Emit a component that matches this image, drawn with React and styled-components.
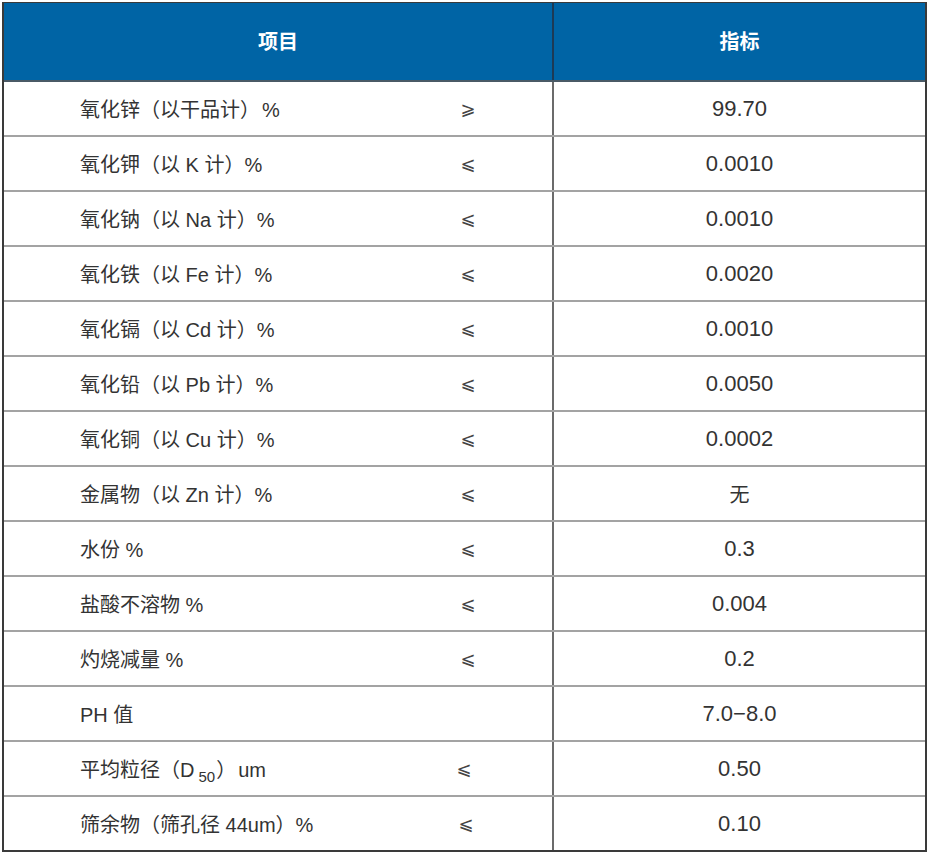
import React from "react";
import styled, { createGlobalStyle } from "styled-components";

const Global = createGlobalStyle`
  html, body { margin: 0; padding: 0; background: #fff; }
  body { font-family: "Liberation Sans", "Noto Sans CJK SC", sans-serif; }
`;

const Table = styled.div`
  margin: 2px 0 0 2px;
  width: 925px;
  border: 2px solid #3a3a3a;
  border-top-width: 1px;
  box-sizing: border-box;
  display: flex;
  flex-direction: column;
`;

const Header = styled.div`
  display: grid;
  grid-template-columns: 548px 2px 1fr;
  height: 79px;
  background: #0064a5;
  border-bottom: 2px solid #4a5a66;
  box-sizing: border-box;
`;

const HeadCell = styled.div`
  display: flex;
  align-items: center;
  justify-content: center;
  color: #fff;
  font-family: "Noto Sans CJK SC", sans-serif;
  font-weight: 700;
  font-size: 20px;
  padding-bottom: 3px;
`;

const HeadDivider = styled.div`
  background: #1d3a55;
`;

const Body = styled.div`
  display: flex;
  flex-direction: column;
  height: 768px;
`;

const Row = styled.div`
  flex: 1;
  display: grid;
  grid-template-columns: 548px 2px 1fr;
  border-bottom: ${(p) => (p.$last ? "none" : "2px solid #a3a3a3")};
  box-sizing: border-box;
`;

const NameCell = styled.div`
  display: grid;
  grid-template-columns: 424px 80px 1fr;
  align-items: center;
  color: #333;
`;

const Label = styled.div`
  padding-left: 76px;
  font-size: 20px;
  font-family: "Liberation Sans", "Noto Sans CJK SC", sans-serif;
  white-space: nowrap;
`;

const Sym = styled.div`
  text-align: center;
  font-family: "DejaVu Sans", sans-serif;
  font-size: 18px;
  color: #444;
  transform: translateX(${(p) => p.$shift || 0}px);
`;

const Divider = styled.div`
  background: #6b6b6b;
`;

const Value = styled.div`
  display: flex;
  align-items: center;
  justify-content: center;
  color: #333;
  font-size: 22px;
  font-family: "Liberation Sans", "Noto Sans CJK SC", sans-serif;
`;

const CjkValue = styled.span`
  font-size: 20px;
`;

const Sub = styled.span`
  font-size: 15px;
  position: relative;
  top: 5px;
  margin-left: 4px;
  margin-right: 1px;
`;

const Unit = styled.span`
  margin-left: ${(p) => p.$gap || 0}px;
`;

const rows = [
  { name: "氧化锌（以干品计）", unit: "%", gap: 2, sym: "⩾", val: "99.70" },
  { name: "氧化钾（以 K 计）", unit: "%", sym: "⩽", val: "0.0010" },
  { name: "氧化钠（以 Na 计）", unit: "%", sym: "⩽", val: "0.0010" },
  { name: "氧化铁（以 Fe 计）", unit: "%", sym: "⩽", val: "0.0020" },
  { name: "氧化镉（以 Cd 计）", unit: "%", sym: "⩽", val: "0.0010" },
  { name: "氧化铅（以 Pb 计）", unit: "%", sym: "⩽", val: "0.0050" },
  { name: "氧化铜（以 Cu 计）", unit: "%", sym: "⩽", val: "0.0002" },
  { name: "金属物（以 Zn 计）", unit: "%", sym: "⩽", val: "无", cjk: true },
  { name: "水份 ", unit: "%", sym: "⩽", val: "0.3" },
  { name: "盐酸不溶物 ", unit: "%", sym: "⩽", val: "0.004" },
  { name: "灼烧减量 ", unit: "%", sym: "⩽", val: "0.2" },
  { name: "PH 值", unit: "", sym: "", val: "7.0−8.0" },
  { name: "d50", unit: "", sym: "⩽", val: "0.50", shift: -4 },
  { name: "筛余物（筛孔径 44um）", unit: "%", sym: "⩽", val: "0.10", shift: -2 },
];

export default function App() {
  return (
    <>
      <Global />
      <Table>
        <Header>
          <HeadCell>项目</HeadCell>
          <HeadDivider />
          <HeadCell>指标</HeadCell>
        </Header>
        <Body>
          {rows.map((r, i) => (
            <Row key={i} $last={i === rows.length - 1}>
              <NameCell>
                <Label>
                  {r.name === "d50" ? (
                    <>
                      平均粒径（D<Sub>50</Sub>）<Unit $gap={2}>um</Unit>
                    </>
                  ) : (
                    <>
                      {r.name}
                      {r.unit && <Unit $gap={r.gap}>{r.unit}</Unit>}
                    </>
                  )}
                </Label>
                <Sym $shift={r.shift}>{r.sym}</Sym>
                <span />
              </NameCell>
              <Divider />
              <Value>{r.cjk ? <CjkValue>{r.val}</CjkValue> : r.val}</Value>
            </Row>
          ))}
        </Body>
      </Table>
    </>
  );
}
